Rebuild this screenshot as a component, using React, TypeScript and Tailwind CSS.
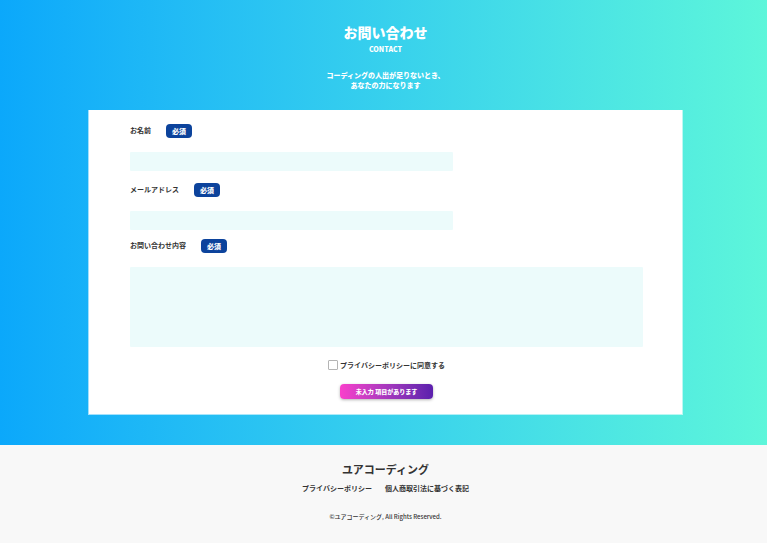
import { useState } from "react";
import type { ReactNode } from "react";

function FieldLabel({ id, children }: { id: string; children: ReactNode }) {
  return (
    <div className="mb-[14px] flex items-start gap-[15px]">
      <label htmlFor={id} className="text-[7px] leading-[13px] font-bold">
        {children}
      </label>
      <span className="rounded-[4px] bg-[#0c439c] px-[6px] text-[7px] leading-[14px] font-black text-white">
        必須
      </span>
    </div>
  );
}

const fieldClass =
  "block rounded-[1px] bg-[#ecfbfb] px-2 text-[7px] outline-none focus:ring-1 focus:ring-[#0c439c]";

export default function App() {
  const [agreed, setAgreed] = useState(false);

  return (
    <div className="flex min-h-screen flex-col bg-[#f8f8f8] font-['Noto_Sans_CJK_JP',sans-serif] text-[#333]">
      <main className="bg-linear-to-r from-[#0ba8fb] to-[#5df6da] pt-[22px] pr-[84px] pb-[30px] pl-[88px]">
        <header className="text-center text-white">
          <h1 className="text-[14px] leading-[20px] font-black">お問い合わせ</h1>
          <p className="mt-[2px] text-[7px] leading-[10px] font-black">CONTACT</p>
          <p className="mt-[16px] text-[7px] leading-[10px] font-black">
            コーディングの人出が足りないとき、
            <br />
            あなたの力になります
          </p>
        </header>

        <form
          className="mt-[20px] border border-t-0 border-white/60 bg-white bg-clip-padding pt-[14px] pr-[39px] pb-[15px] pl-[41px]"
          onSubmit={(e) => e.preventDefault()}
        >
          <FieldLabel id="name">お名前</FieldLabel>
          <input id="name" type="text" className={`${fieldClass} mb-[12px] h-[19px] w-[63%]`} />
          <FieldLabel id="email">メールアドレス</FieldLabel>
          <input id="email" type="email" className={`${fieldClass} mb-[9px] h-[19px] w-[63%]`} />
          <FieldLabel id="message">お問い合わせ内容</FieldLabel>
          <textarea id="message" className={`${fieldClass} h-[80px] w-full resize-none py-1`} />

          <div className="mt-[13px] flex items-center justify-center gap-[2px]">
            <input
              id="agree"
              type="checkbox"
              checked={agreed}
              onChange={(e) => setAgreed(e.target.checked)}
              className="size-[10px] appearance-none rounded-[1px] border border-[#b4b4b4] bg-white checked:bg-[#0c439c]"
            />
            <label htmlFor="agree" className="text-[7px] leading-[10px] font-bold">
              プライバシーポリシーに同意する
            </label>
          </div>

          <button
            type="submit"
            className="mx-auto mt-[14px] block rounded-[4px] bg-linear-to-r from-[#f93fcb] to-[#5b1fad] px-[16px] text-[6px] leading-[15px] font-black text-white shadow-[0_1px_3px_rgba(0,0,0,0.3)]"
          >
            未入力 項目があります
          </button>
        </form>
      </main>

      <footer className="pt-[16px] pb-[20px] pl-[4px] text-center">
        <p className="text-[11px] leading-[16px] font-bold">ユアコーディング</p>
        <nav className="mt-[6px] flex justify-center gap-[13px] text-[7px] leading-[10px] font-bold">
          <a href="#privacy">プライバシーポリシー</a>
          <a href="#law">個人商取引法に基づく表記</a>
        </nav>
        <p className="mt-[19px] text-[6px] leading-[10px] font-medium">©ユアコーディング, All Rights Reserved.</p>
      </footer>
    </div>
  );
}
